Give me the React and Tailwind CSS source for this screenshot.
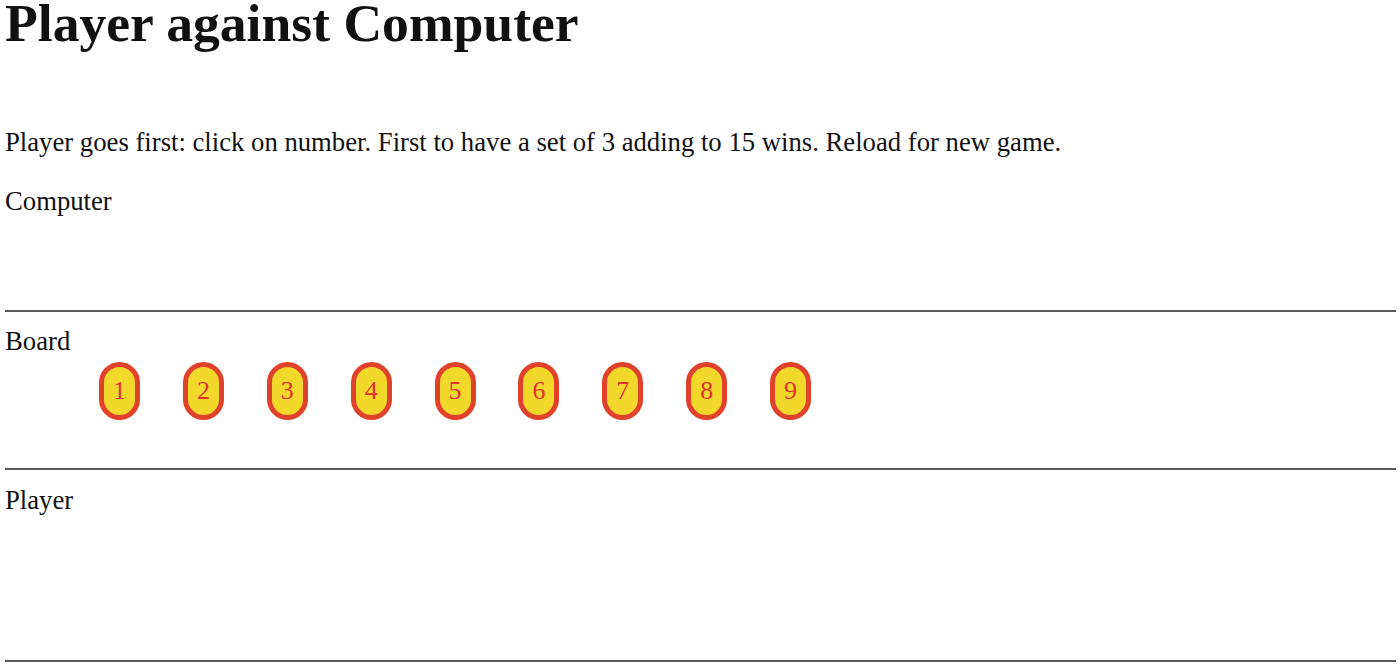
import React from "react";

const nums = [1, 2, 3, 4, 5, 6, 7, 8, 9];

function Rule() {
  return <div className="h-[2px] w-full bg-[#585858]" />;
}

export default function App() {
  return (
    <div className="min-h-[667px] bg-white pl-[5px] pr-[4px] text-[#111] font-['Liberation_Serif',serif] overflow-hidden">
      <h1 className="mt-[-3px] text-[53.6px] leading-[52px] font-bold whitespace-nowrap">Player against Computer</h1>
      <p className="mt-[78px] text-[26.7px] leading-[30px] whitespace-nowrap">
        Player goes first: click on number. First to have a set of 3 adding to 15 wins. Reload for new game.
      </p>
      <div className="mt-[29px] text-[26.7px] leading-[30px]">Computer</div>
      <div className="mt-[94px]"><Rule /></div>
      <div className="mt-[14px] text-[26.7px] leading-[30px]">Board</div>
      <div className="mt-[6px] flex pl-[94px] gap-[42.875px]">
        {nums.map((n) => (
          <div
            key={n}
            className="w-[41px] h-[58px] rounded-full border-[5px] border-[#e0412b] bg-[#f2d82b] flex items-center justify-center text-[#e0322b] text-[26px] leading-none"
          >
            {n}
          </div>
        ))}
      </div>
      <div className="mt-[48px]"><Rule /></div>
      <div className="mt-[15px] text-[26.7px] leading-[30px]">Player</div>
      <div className="mt-[145px]"><Rule /></div>
    </div>
  );
}
